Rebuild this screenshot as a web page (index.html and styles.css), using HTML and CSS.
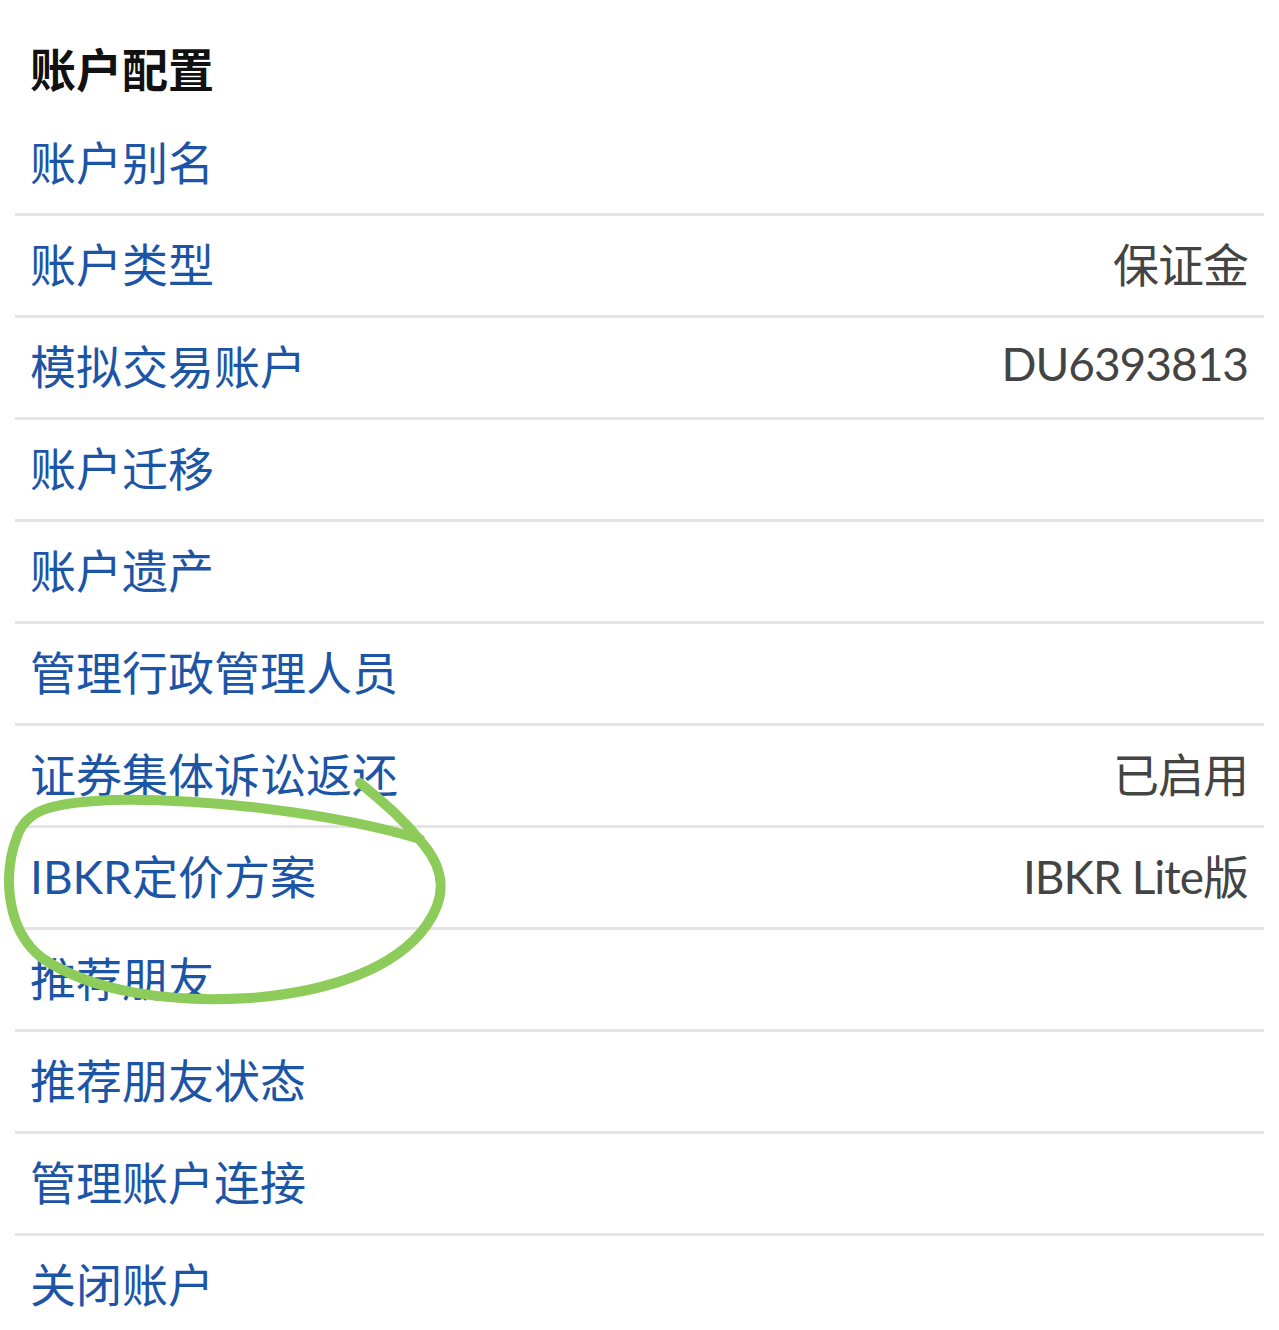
FILE: index.html
```html
<!DOCTYPE html>
<html lang="zh-CN">
<head>
<meta charset="utf-8">
<title>账户配置</title>
<link rel="stylesheet" href="styles.css">
</head>
<body>
<div class="page">
  <h1 class="title">账户配置</h1>
  <ul class="list">
    <li class="row"><span class="label">账户别名</span></li>
    <li class="row"><span class="label">账户类型</span><span class="value">保证金</span></li>
    <li class="row"><span class="label">模拟交易账户</span><span class="value">DU6393813</span></li>
    <li class="row"><span class="label">账户迁移</span></li>
    <li class="row"><span class="label">账户遗产</span></li>
    <li class="row"><span class="label">管理行政管理人员</span></li>
    <li class="row"><span class="label">证券集体诉讼返还</span><span class="value">已启用</span></li>
    <li class="row"><span class="label">IBKR定价方案</span><span class="value">IBKR Lite版</span></li>
    <li class="row"><span class="label">推荐朋友</span></li>
    <li class="row"><span class="label">推荐朋友状态</span></li>
    <li class="row"><span class="label">管理账户连接</span></li>
    <li class="row row-last"><span class="label">关闭账户</span></li>
  </ul>
  <svg class="scribble" width="1279" height="1330" viewBox="0 0 1279 1330" aria-hidden="true">
    <path d="M360 783 C 380 800, 400 815, 424 845 C 446 872, 446 898, 426 926 C 396 968, 330 992, 250 998 C 170 1003, 92 992, 42 958 C 6 930, 2 874, 18 834 C 28 810, 50 803, 110 800 C 200 798, 330 812, 420 839" />
  </svg>
</div>
</body>
</html>
```

FILE: styles.css
```css
html, body {
  margin: 0;
  padding: 0;
  background: #ffffff;
}

.page {
  position: relative;
  width: 1279px;
  min-height: 1330px;
  overflow: hidden;
  font-family: Lato, "Noto Sans CJK SC", sans-serif;
}

.title {
  margin: 0;
  padding: 40px 0 14px 30px;
  height: 60px;
  line-height: 60px;
  font-size: 46px;
  font-weight: 700;
  color: #111111;
}

.list {
  list-style: none;
  margin: 0 15px;
  padding: 0;
}

.row {
  display: flex;
  justify-content: space-between;
  align-items: center;
  height: 91px;
  padding: 0 16px 8px 15px;
  border-bottom: 3px solid #e4e4e4;
  font-size: 46px;
}

.row-last {
  border-bottom: none;
}

.label {
  color: #1d55a6;
}

.value {
  color: #444444;
  letter-spacing: -1px;
}

.scribble {
  position: absolute;
  left: 0;
  top: 0;
  pointer-events: none;
}

.scribble path {
  fill: none;
  stroke: #8dcc5a;
  stroke-width: 10;
  stroke-linecap: round;
  stroke-linejoin: round;
}
```
